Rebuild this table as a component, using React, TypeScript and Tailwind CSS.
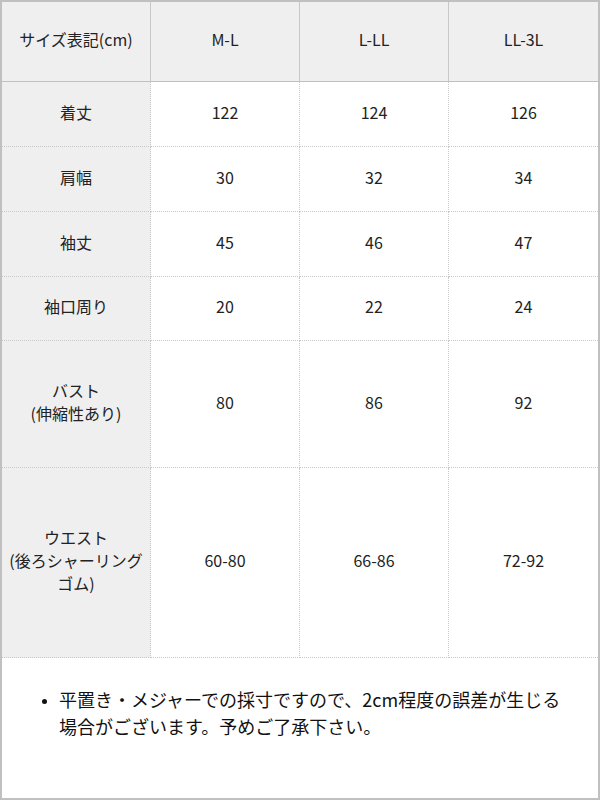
import React from "react";

const cols = ["M-L", "L-LL", "LL-3L"];
const rows: { label: React.ReactNode; vals: string[]; h: string }[] = [
  { label: "着丈", vals: ["122", "124", "126"], h: "h-[65px]" },
  { label: "肩幅", vals: ["30", "32", "34"], h: "h-[65px]" },
  { label: "袖丈", vals: ["45", "46", "47"], h: "h-[65px]" },
  { label: "袖口周り", vals: ["20", "22", "24"], h: "h-[64px]" },
  {
    label: (
      <>
        バスト
        <br />
        (伸縮性あり)
      </>
    ),
    vals: ["80", "86", "92"],
    h: "h-[127px]",
  },
  {
    label: (
      <>
        ウエスト
        <br />
        (後ろシャーリング
        <br />
        ゴム)
      </>
    ),
    vals: ["60-80", "66-86", "72-92"],
    h: "h-[190px]",
  },
];

export default function App() {
  return (
    <div
      className="w-[600px] h-[800px] border-2 border-[#c0c0c0] bg-white text-[#222] flex flex-col"
      style={{ fontFamily: '"Noto Sans CJK JP", "Noto Sans", sans-serif' }}
    >
      <div className="grid grid-cols-4 text-[16px] leading-[23px]">
        <div className="h-[80px] pb-[4px] bg-[#efefef] border-b border-solid border-[#c0c0c0] border-r border-r-dotted border-r-[#c8c8c8] flex items-center justify-center text-center">
          サイズ表記(cm)
        </div>
        {cols.map((c, i) => (
          <div
            key={c}
            className={`h-[80px] pb-[4px] bg-[#efefef] border-b border-solid border-[#c0c0c0] flex items-center justify-center ${
              i < 2 ? "border-r border-r-dotted border-r-[#c8c8c8]" : ""
            }`}
          >
            {c}
          </div>
        ))}
        {rows.map((r, ri) => (
          <React.Fragment key={ri}>
            <div
              className={`${r.h} pb-[4px] bg-[#efefef] border-b border-dotted border-[#c8c8c8] border-r flex items-center justify-center text-center`}
            >
              <div>{r.label}</div>
            </div>
            {r.vals.map((v, i) => (
              <div
                key={i}
                className={`${r.h} pb-[4px] border-b border-dotted border-[#c8c8c8] flex items-center justify-center ${
                  i < 2 ? "border-r" : ""
                }`}
              >
                {v}
              </div>
            ))}
          </React.Fragment>
        ))}
      </div>
      <div className="flex-1 pt-[28px]">
        <ul className="list-disc pl-[57px] pr-[20px] text-[18px] leading-[27px] text-[#111] marker:text-[13px]">
          <li>
            平置き・メジャーでの採寸ですので、2cm程度の誤差が生じる場合がございます。予めご了承下さい。
          </li>
        </ul>
      </div>
    </div>
  );
}
